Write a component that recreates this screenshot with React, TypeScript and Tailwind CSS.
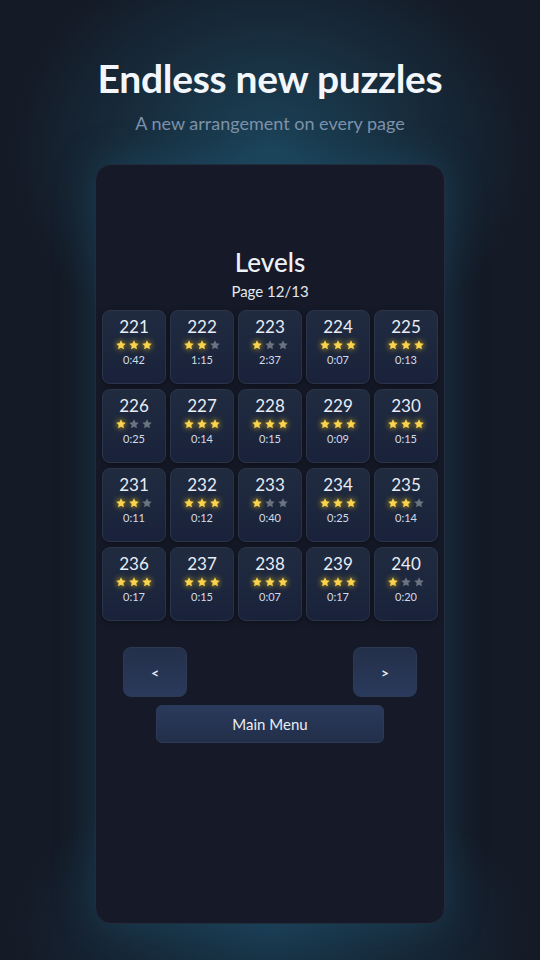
import React from 'react'

type Level = { n: number; stars: number; time: string }

const levels: Level[] = [
  { n: 221, stars: 3, time: '0:42' },
  { n: 222, stars: 2, time: '1:15' },
  { n: 223, stars: 1, time: '2:37' },
  { n: 224, stars: 3, time: '0:07' },
  { n: 225, stars: 3, time: '0:13' },
  { n: 226, stars: 1, time: '0:25' },
  { n: 227, stars: 3, time: '0:14' },
  { n: 228, stars: 3, time: '0:15' },
  { n: 229, stars: 3, time: '0:09' },
  { n: 230, stars: 3, time: '0:15' },
  { n: 231, stars: 2, time: '0:11' },
  { n: 232, stars: 3, time: '0:12' },
  { n: 233, stars: 1, time: '0:40' },
  { n: 234, stars: 3, time: '0:25' },
  { n: 235, stars: 2, time: '0:14' },
  { n: 236, stars: 3, time: '0:17' },
  { n: 237, stars: 3, time: '0:15' },
  { n: 238, stars: 3, time: '0:07' },
  { n: 239, stars: 3, time: '0:17' },
  { n: 240, stars: 1, time: '0:20' },
]

function Star({ on }: { on: boolean }) {
  return (
    <svg
      width="12"
      height="12"
      viewBox="0 0 24 24"
      className={on ? 'drop-shadow-[0_0_3px_rgba(250,204,21,0.9)]' : ''}
    >
      <path
        d="M12 2.5l2.9 6.1 6.6.8-4.9 4.6 1.3 6.6L12 17.3l-5.9 3.3 1.3-6.6-4.9-4.6 6.6-.8z"
        fill={on ? '#fcd34d' : '#6b7280'}
      />
    </svg>
  )
}

function Tile({ l }: { l: Level }) {
  return (
    <div className="flex h-[74px] flex-col items-center rounded-lg border border-[#2a3549] bg-gradient-to-b from-[#202b40] to-[#19223a] pt-[6px] shadow-[0_2px_6px_rgba(0,0,0,0.35)]">
      <div className="text-[17px] leading-[20px] text-[#e8ecf4]">{l.n}</div>
      <div className="mt-[2px] flex gap-[1px]">
        {[0, 1, 2].map((i) => (
          <Star key={i} on={i < l.stars} />
        ))}
      </div>
      <div className="mt-[2px] text-[11px] leading-[14px] text-[#d5dbe6]">{l.time}</div>
    </div>
  )
}

export default function App() {
  return (
    <div className="relative flex h-[960px] w-[540px] flex-col items-center overflow-hidden bg-[#141a26] font-['Lato',sans-serif]">
      {/* background glows */}
      <div className="pointer-events-none absolute left-1/2 top-[-60px] h-[420px] w-[520px] -translate-x-1/2 rounded-full bg-[radial-gradient(closest-side,rgba(30,80,105,0.75),rgba(20,26,38,0))]" />
      <div className="pointer-events-none absolute bottom-[-120px] left-1/2 h-[300px] w-[520px] -translate-x-1/2 rounded-full bg-[radial-gradient(closest-side,rgba(28,70,95,0.7),rgba(20,26,38,0))]" />

      <h1 className="relative mt-[54px] text-[39px] font-bold leading-[48px] tracking-[-0.3px] text-[#f3f6fb]">
        Endless new puzzles
      </h1>
      <p className="relative mt-[10px] text-[18px] leading-[22px] text-[#7f93ab]">
        A new arrangement on every page
      </p>

      <div className="relative mt-[30px] flex h-[760px] w-[350px] flex-col items-center rounded-2xl border border-[#232c3d] bg-[#161a28] shadow-[0_0_40px_rgba(30,90,120,0.45)]">
        <div className="mt-[80px] text-[26px] font-medium leading-[34px] text-[#eef1f6]">Levels</div>
        <div className="mt-[3px] text-[15px] leading-[18px] text-[#e3e7ee]">Page 12/13</div>

        <div className="mt-[10px] grid w-[336px] grid-cols-5 gap-x-[4px] gap-y-[5px]">
          {levels.map((l) => (
            <Tile key={l.n} l={l} />
          ))}
        </div>

        <div className="mt-[26px] flex w-[294px] justify-between">
          <button className="h-[50px] w-[64px] rounded-lg border border-[#2c3a55] bg-gradient-to-b from-[#24304a] to-[#2a3a5c] text-[14px] font-bold text-[#e8ecf4]">
            &lt;
          </button>
          <button className="h-[50px] w-[64px] rounded-lg border border-[#2c3a55] bg-gradient-to-b from-[#24304a] to-[#2a3a5c] text-[14px] font-bold text-[#e8ecf4]">
            &gt;
          </button>
        </div>
        <button className="mt-[8px] h-[38px] w-[228px] rounded-md border border-[#2c3a55] bg-gradient-to-b from-[#2a3a5c] to-[#222f4a] text-[15px] text-[#e8ecf4]">
          Main Menu
        </button>
      </div>
    </div>
  )
}
